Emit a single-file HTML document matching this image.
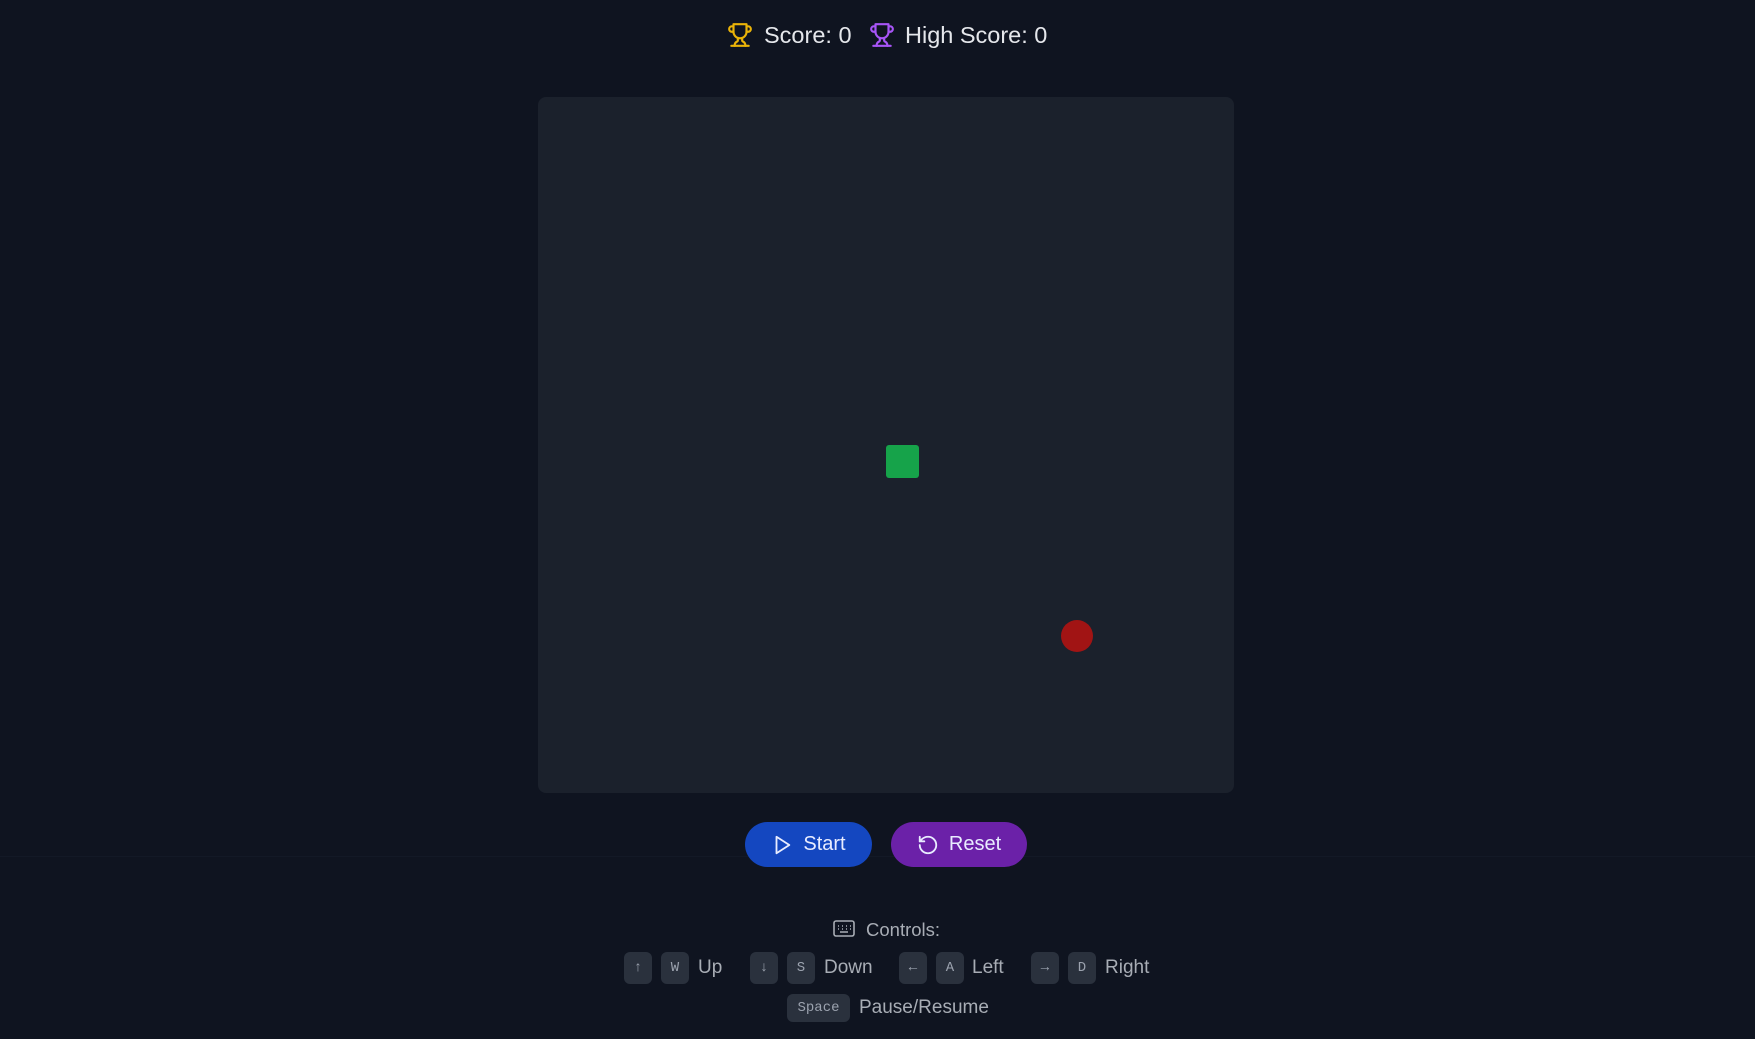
<!DOCTYPE html>
<html><head><meta charset="utf-8"><style>
body{margin:0;width:1755px;height:1039px;background:#0f1420;font-family:"Liberation Sans",sans-serif;position:relative;overflow:hidden;color:#e5e7eb}
.a{position:absolute;white-space:nowrap}
.hd{font-size:23.5px;top:22px;color:#e5e7eb}
.board{position:absolute;left:538px;top:97px;width:696px;height:696px;background:#1b212c;border-radius:8px}
.btn{position:absolute;top:822px;height:45px;border-radius:23px;color:#e8ecff;font-size:20px;display:flex;align-items:center;justify-content:center;gap:10px}
.line{position:absolute;left:0;right:0;top:856px;height:1px;background:#131926}
.key{position:absolute;top:952px;height:32px;width:28px;border-radius:6px;background:#2a313d;color:#9ca3af;font-family:"Liberation Mono",monospace;font-size:14px;display:flex;align-items:center;justify-content:center}
.lb{position:absolute;top:957px;font-size:19px;color:#a8adb5}
</style></head><body>
<svg class="a" style="left:727px;top:22px" width="26" height="26" viewBox="0 0 24 24" fill="none" stroke="#eab308" stroke-width="2" stroke-linecap="round" stroke-linejoin="round"><path d="M6 9H4.5a2.5 2.5 0 0 1 0-5H6"/><path d="M18 9h1.5a2.5 2.5 0 0 0 0-5H18"/><path d="M4 22h16"/><path d="M10 14.66V17c0 .55-.47.98-.97 1.21C7.85 18.75 7 20.24 7 22"/><path d="M14 14.66V17c0 .55.47.98.97 1.21C16.15 18.75 17 20.24 17 22"/><path d="M18 2H6v7a6 6 0 0 0 12 0V2Z"/></svg>
<div class="a hd" style="left:764px">Score: 0</div>
<svg class="a" style="left:869px;top:22px" width="26" height="26" viewBox="0 0 24 24" fill="none" stroke="#a855f7" stroke-width="2" stroke-linecap="round" stroke-linejoin="round"><path d="M6 9H4.5a2.5 2.5 0 0 1 0-5H6"/><path d="M18 9h1.5a2.5 2.5 0 0 0 0-5H18"/><path d="M4 22h16"/><path d="M10 14.66V17c0 .55-.47.98-.97 1.21C7.85 18.75 7 20.24 7 22"/><path d="M14 14.66V17c0 .55.47.98.97 1.21C16.15 18.75 17 20.24 17 22"/><path d="M18 2H6v7a6 6 0 0 0 12 0V2Z"/></svg>
<div class="a hd" style="left:905px">High Score: 0</div>
<div class="board"></div>
<div class="a" style="left:886px;top:445px;width:33px;height:33px;background:#16a34a;border-radius:3px"></div>
<div class="a" style="left:1061px;top:620px;width:32px;height:32px;background:#a11414;border-radius:50%"></div>
<div class="line"></div>
<div class="btn" style="left:745px;width:127px;background:#1447c0"><svg width="22" height="22" viewBox="0 0 24 24" fill="none" stroke="#e8ecff" stroke-width="2" stroke-linejoin="round"><path d="M6 3l14 9-14 9z"/></svg>Start</div>
<div class="btn" style="left:891px;width:136px;background:#6b21a8"><svg width="22" height="22" viewBox="0 0 24 24" fill="none" stroke="#e8ecff" stroke-width="2" stroke-linecap="round" stroke-linejoin="round"><path d="M3 12a9 9 0 1 0 9-9 9.75 9.75 0 0 0-6.74 2.74L3 8"/><path d="M3 3v5h5"/></svg>Reset</div>
<svg class="a" style="left:833px;top:919px" width="22" height="20" viewBox="0 0 22 20" fill="none" stroke="#a8adb5" stroke-width="1.6"><rect x="1" y="2" width="20" height="15" rx="2"/><path d="M5 7h1M9 7h1M13 7h1M17 7h1M5 10h1M9 10h1M13 10h1M17 10h1M7 13h8"/></svg>
<div class="a" style="left:866px;top:919px;font-size:18.5px;color:#a8adb5">Controls:</div>
<div class="key" style="left:624px">↑</div><div class="key" style="left:661px">W</div><div class="lb" style="left:698px">Up</div>
<div class="key" style="left:750px">↓</div><div class="key" style="left:787px">S</div><div class="lb" style="left:824px">Down</div>
<div class="key" style="left:899px">←</div><div class="key" style="left:936px">A</div><div class="lb" style="left:972px">Left</div>
<div class="key" style="left:1031px">→</div><div class="key" style="left:1068px">D</div><div class="lb" style="left:1105px">Right</div>
<div class="key" style="left:787px;top:994px;width:63px;height:28px">Space</div>
<div class="lb" style="left:859px;top:997px">Pause/Resume</div>
</body></html>
